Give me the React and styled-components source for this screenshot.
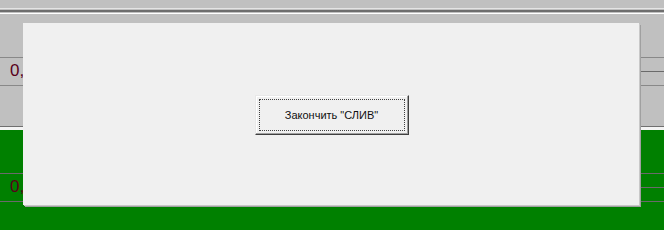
import React from 'react'
import styled, { createGlobalStyle } from 'styled-components'

const GlobalStyle = createGlobalStyle`
  *, *::before, *::after {
    box-sizing: border-box;
  }
  html, body {
    margin: 0;
    padding: 0;
    background: #c0c0c0;
  }
  body {
    font-family: "Liberation Sans", Arial, sans-serif;
  }
`

const Screen = styled.div`
  position: relative;
  width: 664px;
  height: 230px;
  overflow: hidden;
  background: #c0c0c0;
  display: flex;
  flex-direction: column;
`

const Rule = styled.div`
  height: ${(p) => p.h || 1}px;
  margin-top: ${(p) => p.mt || 0}px;
  background: ${(p) => p.color};
  flex-shrink: 0;
`

const Band = styled.div`
  display: flex;
  flex-direction: column;
  background: ${(p) => p.bg};
  height: ${(p) => p.h}px;
  padding-top: 43px;
  flex-shrink: 0;
`

const Grid = styled.div`
  display: flex;
  border-top: 1px solid ${(p) => p.line};
  border-bottom: 1px solid ${(p) => p.line};
  height: 29px;
`

const ValueCell = styled.div`
  width: 200px;
  padding-left: 10px;
  padding-bottom: 3px;
  display: flex;
  align-items: center;
  font-family: "Liberation Sans", Arial, sans-serif;
  font-size: 17px;
  line-height: 1;
  color: #58001a;
`

const SplitCell = styled.div`
  flex: 1;
  display: flex;
  flex-direction: column;
`

const SubRow = styled.div`
  flex: 1;
  & + & {
    border-top: 1px solid ${(p) => p.line};
  }
`

const Dialog = styled.div`
  position: absolute;
  left: 23px;
  top: 23px;
  width: 616px;
  height: 182px;
  background: #f0f0f0;
  box-shadow: 1px 1px 0 #c8c8c8, 2px 2px 0 #a0a0a0;
  display: flex;
  align-items: center;
  justify-content: center;
`

const Button = styled.button`
  width: 154px;
  height: 40px;
  margin-top: 2px;
  margin-left: 1px;
  padding: 0;
  background: #f0f0f0;
  border: 1px solid;
  border-color: #e8e8e8 #404040 #404040 #e8e8e8;
  box-shadow: inset -1px -1px 0 #a0a0a0, inset 1px 1px 0 #ffffff;
  font-family: "Liberation Sans", Arial, sans-serif;
  font-size: 11px;
  color: #101010;
  display: flex;
  align-items: center;
  justify-content: center;
  position: relative;
  cursor: default;
`

const Focus = styled.span`
  position: absolute;
  inset: 3px;
  border: 1px dotted #404040;
`

export default function App() {
  return (
    <>
      <GlobalStyle />
      <Screen>
        <Rule color="#e4e4e4" mt={8} />
        <Rule color="#6e6e6e" h={2} mt={1} />
        <Rule color="#ffffff" mt={1} />
        <Band bg="#c0c0c0" h={112}>
          <Grid line="#888888">
            <ValueCell>0,00</ValueCell>
            <SplitCell>
              <SubRow line="#707070" />
              <SubRow line="#707070" />
            </SplitCell>
          </Grid>
        </Band>
        <Rule color="#707070" />
        <Rule color="#f4f4f4" h={3} />
        <Band bg="#008000" h={100}>
          <Grid line="#6a6a6a">
            <ValueCell>0,00</ValueCell>
            <SplitCell>
              <SubRow line="#6a6a6a" />
              <SubRow line="#6a6a6a" />
            </SplitCell>
          </Grid>
        </Band>
        <Dialog>
          <Button>
            <Focus />
            Закончить "СЛИВ"
          </Button>
        </Dialog>
      </Screen>
    </>
  )
}
